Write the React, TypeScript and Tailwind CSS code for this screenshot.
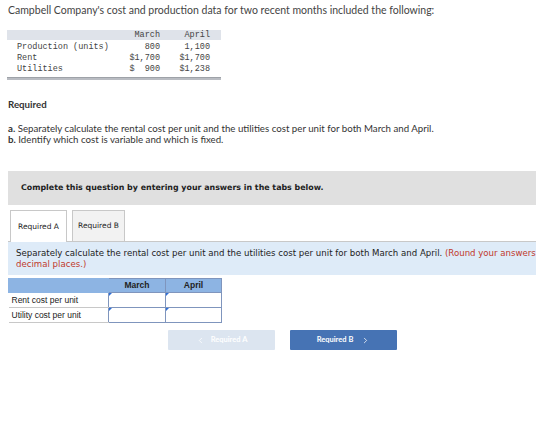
import { ChevronLeft, ChevronRight } from "lucide-react";

const COST_ROWS = [
  { label: "Production (units)", march: "800", april: "1,100" },
  { label: "Rent", march: "$1,700", april: "$1,700" },
  { label: "Utilities", march: "$  900", april: "$1,238" },
];

const ANSWER_ROWS = ["Rent cost per unit", "Utility cost per unit"];

function AnswerCell() {
  return (
    <td className="p-0 border border-[#7f95bd]">
      <div className="relative h-[14px] bg-white">
        <span className="absolute left-0 top-0 w-0 h-0 border-t-[3px] border-r-[3px] border-t-[#2f6fd6] border-r-transparent" />
      </div>
    </td>
  );
}

export default function App() {
  return (
    <div className="w-[560px] h-[448px] bg-white overflow-hidden text-[#333]">
      <p className="pl-[8px] pt-[4px] text-[10.5px] leading-[13px] font-['Lato',sans-serif] text-[#444]">
        Campbell Company's cost and production data for two recent months included the following:
      </p>

      {/* source data */}
      <div className="ml-[7px] mt-[13px] w-[214px] font-['Liberation_Mono',monospace] text-[8.5px] text-[#444]">
        <div className="flex h-[10px] items-center bg-[#dfe3ea] leading-none">
          <span className="flex-1" />
          <span className="w-[50px] text-right">March</span>
          <span className="w-[50px] text-right">April</span>
          <span className="w-[11px]" />
        </div>
        <div className="pt-[2px]">
          {COST_ROWS.map((r) => (
            <div key={r.label} className="flex h-[11px] items-center leading-none whitespace-pre">
              <span className="flex-1 pl-[10px]">{r.label}</span>
              <span className="w-[50px] text-right">{r.march}</span>
              <span className="w-[50px] text-right">{r.april}</span>
              <span className="w-[11px]" />
            </div>
          ))}
        </div>
        <div className="mt-[2px] h-[3px] bg-[#b9bcc2] border-t border-[#9ea2a8]" />
      </div>

      <div className="pl-[8px] font-['Lato',sans-serif] text-[9.7px] leading-[11px] text-[#333]">
        <p className="mt-[19px] font-bold">Required</p>
        <p className="mt-[13px]">
          <b>a.</b> Separately calculate the rental cost per unit and the utilities cost per unit for both March and April.
        </p>
        <p>
          <b>b.</b> Identify which cost is variable and which is fixed.
        </p>
      </div>

      <div className="ml-[8px] mt-[26px] w-[528px] h-[34px] bg-[#e0e0e0] flex items-center pl-[13px] font-['DejaVu_Sans',sans-serif] text-[7.9px] font-bold text-[#222]">
        Complete this question by entering your answers in the tabs below.
      </div>

      {/* tabs */}
      <div className="ml-[8px] mt-[5px] w-[528px] font-['DejaVu_Sans',sans-serif] text-[7.5px] text-[#222]">
        <div className="flex items-end pl-[2px] gap-[5px]">
          <div className="w-[57px] h-[32px] -mb-px flex items-center justify-center bg-white border border-b-0 border-[#c8c8c8] relative z-10">
            Required A
          </div>
          <div className="w-[53px] h-[31px] flex items-center justify-center bg-[#f2f2f2] border border-b-0 border-[#c8c8c8]">
            Required B
          </div>
        </div>
        <div className="border-t border-[#c8c8c8] bg-[#deebf8] h-[34px] pl-[8px] pt-[6px] text-[8.6px] leading-[11px] whitespace-nowrap overflow-hidden">
          Separately calculate the rental cost per unit and the utilities cost per unit for both March and April.{" "}
          <span className="text-[#c0392b]">(Round your answers to 2</span>
          <br />
          <span className="text-[#c0392b]">decimal places.)</span>
        </div>
      </div>

      {/* answer grid */}
      <table className="ml-[8px] mt-[3px] border-collapse font-['Liberation_Sans',sans-serif] text-[8.5px] text-[#222]">
        <thead>
          <tr className="h-[14px] bg-[#8db4e3]">
            <th className="w-[100px] p-0 border border-[#8db4e3]" />
            <th className="w-[57px] p-0 border border-[#7f95bd] font-bold">March</th>
            <th className="w-[56px] p-0 border border-[#7f95bd] font-bold">April</th>
          </tr>
        </thead>
        <tbody>
          {ANSWER_ROWS.map((label) => (
            <tr key={label}>
              <td className="p-0 pl-[3px] h-[15px] border-b border-[#c8c8c8] text-left">{label}</td>
              <AnswerCell />
              <AnswerCell />
            </tr>
          ))}
        </tbody>
      </table>

      <div className="flex gap-[15px] ml-[168px] mt-[7px] font-['Lato',sans-serif] text-[7.5px] font-bold text-white">
        <button className="w-[107px] h-[20px] flex items-center justify-center gap-[6px] bg-[#dce5f0] rounded-[1px]">
          <ChevronLeft size={9} strokeWidth={2} />
          Required A
        </button>
        <button className="w-[107px] h-[20px] flex items-center justify-center gap-[8px] bg-[#4673b4] rounded-[1px]">
          Required B
          <ChevronRight size={9} strokeWidth={2} />
        </button>
      </div>
    </div>
  );
}
